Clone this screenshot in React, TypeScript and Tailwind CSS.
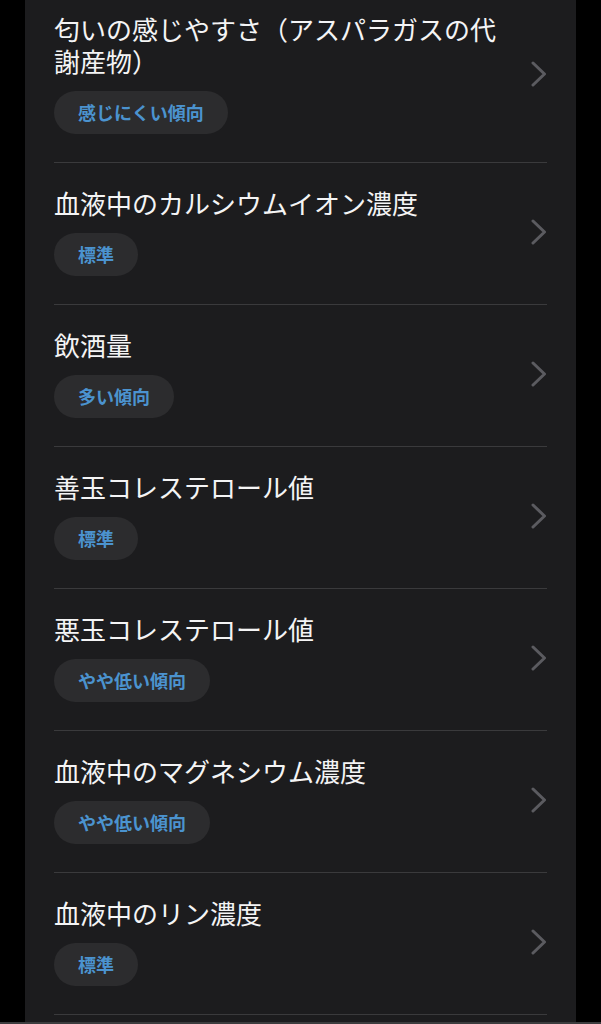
const items = [
  { title: "匂いの感じやすさ（アスパラガスの代謝産物）", badge: "感じにくい傾向" },
  { title: "血液中のカルシウムイオン濃度", badge: "標準" },
  { title: "飲酒量", badge: "多い傾向" },
  { title: "善玉コレステロール値", badge: "標準" },
  { title: "悪玉コレステロール値", badge: "やや低い傾向" },
  { title: "血液中のマグネシウム濃度", badge: "やや低い傾向" },
  { title: "血液中のリン濃度", badge: "標準" },
];

function Chevron() {
  return (
    <svg width="16" height="26" viewBox="0 0 16 26" fill="none" className="shrink-0">
      <path
        d="M2 2 L13.5 13 L2 24"
        stroke="#5b5b60"
        strokeWidth="3"
        strokeLinecap="round"
        strokeLinejoin="round"
      />
    </svg>
  );
}

export default function App() {
  return (
    <div
      className="flex h-[1024px] w-[601px] flex-col overflow-hidden border-b-2 border-[#3c3c3e] bg-black"
      style={{ fontFamily: '"Noto Sans CJK JP", "Noto Sans", sans-serif' }}
    >
      <div className="mx-[25px] flex-1 overflow-hidden bg-[#1c1c1e] px-[29px]">
        <div className="-mt-[11px] border-b border-[#3a3a3c]">
          {items.map((item, i) => (
            <div
              key={i}
              className="flex items-center gap-7 border-t border-[#3a3a3c] pt-[24px] pb-[28px] first:border-t-0"
            >
              <div className="flex-1">
                <div className="text-[26px] leading-[32px] text-[#f4f4f5]">
                  {item.title}
                </div>
                <div className="mt-[14px] inline-flex h-[43px] items-center rounded-full bg-[#2c2c2e] px-6 text-[18px] font-bold text-[#4b93cf]">
                  {item.badge}
                </div>
              </div>
              <Chevron />
            </div>
          ))}
        </div>
      </div>
    </div>
  );
}
